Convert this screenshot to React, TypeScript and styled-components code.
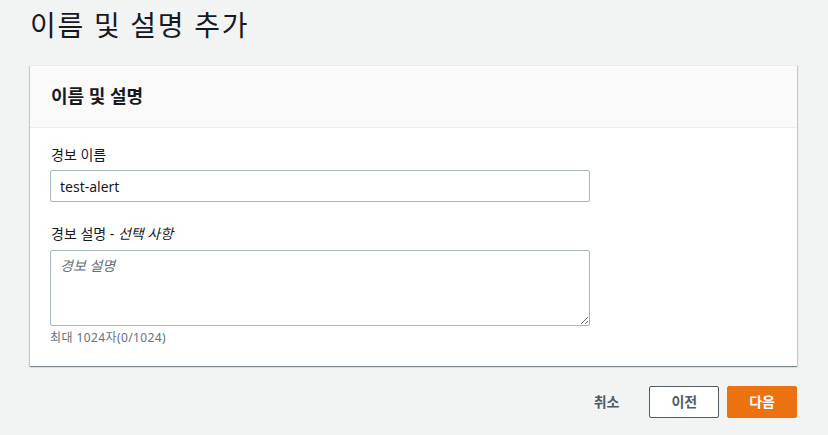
import React from "react";
import styled, { createGlobalStyle } from "styled-components";

const Global = createGlobalStyle`
  html, body { margin: 0; padding: 0; background: #f2f3f3; }
  body {
    font-family: "Noto Sans", "Noto Sans CJK KR", "Liberation Sans", sans-serif;
    color: #16191f;
  }
  * { box-sizing: border-box; }
`;

const Page = styled.div`
  padding: 7px 31px 18px 30px;
  display: flex;
  flex-direction: column;
`;

const Title = styled.h1`
  margin: 0 0 22px 0;
  font-size: 28px;
  line-height: 36px;
  font-weight: 400;
  color: #16191f;
  letter-spacing: 1.7px;
`;

const Card = styled.section`
  background: #fff;
  box-shadow: 0 1px 1px 0 rgba(0, 28, 36, 0.3), 1px 1px 1px 0 rgba(0, 28, 36, 0.15),
    -1px 1px 1px 0 rgba(0, 28, 36, 0.15);
  border-top: 1px solid #eaeded;
`;

const CardHeader = styled.div`
  background: #fafafa;
  border-bottom: 1px solid #eaeded;
  padding: 19px 20px 20px 21px;
`;

const CardTitle = styled.h2`
  margin: 0;
  font-size: 18px;
  line-height: 22px;
  font-weight: 700;
  color: #16191f;
`;

const CardBody = styled.div`
  padding: 16px 20px 20px 20px;
  display: flex;
  flex-direction: column;
  gap: 21px;
`;

const Field = styled.div`
  display: flex;
  flex-direction: column;
  width: 540px;
`;

const Label = styled.label`
  font-size: 14px;
  line-height: 22px;
  color: #16191f;
  padding-left: 1px;
  margin-bottom: 4px;
`;

const Optional = styled.i`
  font-style: italic;
`;

const Input = styled.input`
  height: 32px;
  width: 100%;
  border: 1px solid #aab7b8;
  border-radius: 2px;
  padding: 4px 9px;
  font-family: inherit;
  font-size: 14px;
  color: #16191f;
  background: #fff;
  outline: none;
`;

const TextArea = styled.textarea`
  height: 76px;
  width: 100%;
  margin-top: 1px;
  border: 1px solid #aab7b8;
  border-radius: 2px;
  padding: 4px 9px;
  font-family: inherit;
  font-size: 14px;
  line-height: 22px;
  color: #16191f;
  background: #fff;
  outline: none;
  resize: vertical;
  display: block;
  &::placeholder {
    color: #687078;
    font-style: italic;
  }
`;

const Hint = styled.div`
  font-size: 12px;
  line-height: 16px;
  color: #687078;
  margin-top: 4px;
  letter-spacing: 0.4px;
`;

const Footer = styled.div`
  display: flex;
  justify-content: flex-end;
  align-items: center;
  gap: 8px;
  margin-top: 20px;
`;

const Button = styled.button<{ $variant: "link" | "normal" | "primary" }>`
  font-family: inherit;
  font-size: 14px;
  font-weight: 700;
  line-height: 22px;
  padding: 4px 21px;
  border-radius: 2px;
  cursor: pointer;
  border: 1px solid
    ${(p) => (p.$variant === "primary" ? "#ec7211" : p.$variant === "normal" ? "#545b64" : "transparent")};
  background: ${(p) => (p.$variant === "primary" ? "#ec7211" : p.$variant === "normal" ? "#fff" : "transparent")};
  color: ${(p) => (p.$variant === "primary" ? "#fff" : "#545b64")};
`;

export default function App() {
  return (
    <>
      <Global />
      <Page>
        <Title>이름 및 설명 추가</Title>
        <Card>
          <CardHeader>
            <CardTitle>이름 및 설명</CardTitle>
          </CardHeader>
          <CardBody>
            <Field>
              <Label>경보 이름</Label>
              <Input defaultValue="test-alert" />
            </Field>
            <Field>
              <Label>
                경보 설명 - <Optional>선택 사항</Optional>
              </Label>
              <TextArea placeholder="경보 설명" />
              <Hint>최대 1024자(0/1024)</Hint>
            </Field>
          </CardBody>
        </Card>
        <Footer>
          <Button $variant="link">취소</Button>
          <Button $variant="normal">이전</Button>
          <Button $variant="primary">다음</Button>
        </Footer>
      </Page>
    </>
  );
}
